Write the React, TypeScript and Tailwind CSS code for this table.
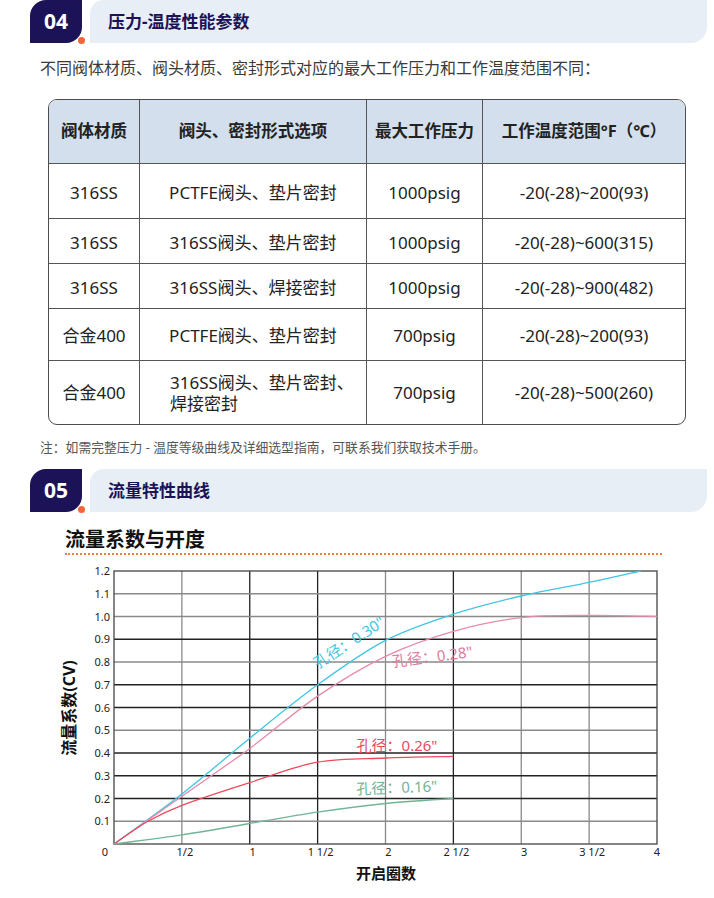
import React from "react";

type Pt = [number, number];

const PL = 114;
const PR = 657;
const PT = 12;
const PB = 285;
const xs = (t: number) => PL + (t / 4) * (PR - PL);
const ys = (v: number) => PB - (v / 1.2) * (PB - PT);

// catmull-rom -> cubic bezier so the curves stay smooth
const smoothPath = (pts: Pt[]) => {
  const p = pts.map(([t, v]) => [xs(t), ys(v)] as Pt);
  let d = `M${p[0][0]},${p[0][1]}`;
  for (let i = 0; i < p.length - 1; i++) {
    const p0 = p[i - 1] || p[i];
    const p1 = p[i];
    const p2 = p[i + 1];
    const p3 = p[i + 2] || p2;
    const c1x = p1[0] + (p2[0] - p0[0]) / 6;
    const c1y = p1[1] + (p2[1] - p0[1]) / 6;
    const c2x = p2[0] - (p3[0] - p1[0]) / 6;
    const c2y = p2[1] - (p3[1] - p1[1]) / 6;
    d += ` C${c1x.toFixed(1)},${c1y.toFixed(1)} ${c2x.toFixed(1)},${c2y.toFixed(1)} ${p2[0].toFixed(1)},${p2[1].toFixed(1)}`;
  }
  return d;
};

const curves = [
  {
    color: "#3ec6e2",
    pts: [[0, 0], [0.5, 0.22], [1, 0.465], [1.5, 0.7], [2, 0.895], [2.5, 1.01], [3, 1.09], [3.5, 1.15], [3.88, 1.2]] as Pt[],
  },
  {
    color: "#e58aac",
    pts: [[0, 0], [0.5, 0.21], [1, 0.42], [1.5, 0.65], [2, 0.825], [2.5, 0.935], [3, 0.995], [3.5, 1.005], [4, 1.0]] as Pt[],
  },
  {
    color: "#ea4c5c",
    pts: [[0, 0], [0.25, 0.1], [0.5, 0.17], [1, 0.27], [1.5, 0.36], [2, 0.378], [2.5, 0.385]] as Pt[],
  },
  {
    color: "#6fb597",
    pts: [[0, 0], [0.5, 0.04], [1, 0.09], [1.5, 0.14], [2, 0.178], [2.5, 0.2]] as Pt[],
  },
];

const vLines = [
  { t: 0.5, dark: false },
  { t: 1, dark: true },
  { t: 1.5, dark: true },
  { t: 2, dark: false },
  { t: 2.5, dark: true },
  { t: 3, dark: false },
  { t: 3.5, dark: false },
];
const hLines = [
  { v: 0.1, dark: false },
  { v: 0.2, dark: true },
  { v: 0.3, dark: true },
  { v: 0.4, dark: true },
  { v: 0.5, dark: false },
  { v: 0.6, dark: true },
  { v: 0.7, dark: true },
  { v: 0.8, dark: false },
  { v: 0.9, dark: true },
  { v: 1.0, dark: false },
  { v: 1.1, dark: false },
];
const xLabels = [
  { t: 0.5, s: "1/2" },
  { t: 1, s: "1" },
  { t: 1.5, s: "1 1/2" },
  { t: 2, s: "2" },
  { t: 2.5, s: "2 1/2" },
  { t: 3, s: "3" },
  { t: 3.5, s: "3 1/2" },
  { t: 4, s: "4" },
];

const rows = [
  { h: "h-[55px]", a: "316SS", b: "PCTFE阀头、垫片密封", c: "1000psig", d: "-20(-28)~200(93)" },
  { h: "h-[45px]", a: "316SS", b: "316SS阀头、垫片密封", c: "1000psig", d: "-20(-28)~600(315)" },
  { h: "h-[45px]", a: "316SS", b: "316SS阀头、焊接密封", c: "1000psig", d: "-20(-28)~900(482)" },
  { h: "h-[52px]", a: "合金400", b: "PCTFE阀头、垫片密封", c: "700psig", d: "-20(-28)~200(93)" },
];

function SectionHeader({ num, title, bold }: { num: string; title: string; bold?: boolean }) {
  return (
    <div className="relative flex h-[43px] pl-[30px] pr-[7px]">
      <div className="flex w-[52px] items-center justify-center rounded-tl-[16px] rounded-br-[16px] bg-[#1b1257] text-[21px] font-bold text-white">
        {num}
      </div>
      <span className="absolute left-[78px] top-[37px] h-[7px] w-[7px] rounded-full bg-[#f2663a]" />
      <div className="ml-2 flex flex-1 items-center rounded-tl-[14px] rounded-br-[16px] bg-[#e7eef6] pl-[18px]">
        <span className={`text-[17px] text-[#1b1257] ${bold ? "font-bold" : "font-semibold"}`}>{title}</span>
      </div>
    </div>
  );
}

export default function App() {
  const font = { fontFamily: '"Noto Sans", "Noto Sans CJK SC", sans-serif' };
  return (
    <div className="w-[714px] bg-white" style={font}>
      <SectionHeader num="04" title="压力-温度性能参数" bold />

      <p className="mt-[13px] pl-[40px] text-[16px] leading-[24px] text-[#3a3a3a]">
        不同阀体材质、阀头材质、密封形式对应的最大工作压力和工作温度范围不同：
      </p>

      <div className="ml-[48px] mt-[19px] w-[638px] overflow-hidden rounded-[9px] border border-[#4d4d4d] text-[17px] text-[#222]">
        <div className="grid h-[64px] grid-cols-[91px_227px_116px_1fr] border-b border-[#555] bg-[#d3dfec] text-[16.5px] font-bold">
          <div className="flex items-center justify-center border-r border-[#555]">阀体材质</div>
          <div className="flex items-center justify-center border-r border-[#555]">阀头、密封形式选项</div>
          <div className="flex items-center justify-center border-r border-[#555]">最大工作压力</div>
          <div className="flex items-center justify-center">工作温度范围°F（℃）</div>
        </div>
        {rows.map((r, i) => (
          <div key={i} className={`grid grid-cols-[91px_227px_116px_1fr] border-b border-[#555] ${r.h}`}>
            <div className="flex items-center justify-center border-r border-[#555] pt-[3px]">{r.a}</div>
            <div className="flex items-center justify-center border-r border-[#555] pt-[3px]">{r.b}</div>
            <div className="flex items-center justify-center border-r border-[#555] pt-[3px]">{r.c}</div>
            <div className="flex items-center justify-center pt-[3px]">{r.d}</div>
          </div>
        ))}
        <div className="grid h-[63px] grid-cols-[91px_227px_116px_1fr]">
          <div className="flex items-center justify-center border-r border-[#555]">合金400</div>
          <div className="flex flex-col justify-center border-r border-[#555] pl-[30px] leading-[21px]">
            <span>316SS阀头、垫片密封、</span>
            <span>焊接密封</span>
          </div>
          <div className="flex items-center justify-center border-r border-[#555]">700psig</div>
          <div className="flex items-center justify-center">-20(-28)~500(260)</div>
        </div>
      </div>

      <p className="mt-[14px] pl-[40px] text-[12.8px] leading-[16px] text-[#555]">
        注：如需完整压力 - 温度等级曲线及详细选型指南，可联系我们获取技术手册。
      </p>

      <div className="mt-[14px]">
        <SectionHeader num="05" title="流量特性曲线" />
      </div>

      <div className="ml-[65px] mt-[16px] w-[597px]">
        <h2 className="text-[20px] font-bold leading-[24px] text-[#111]">流量系数与开度</h2>
        <div className="mt-[1px] border-b-2 border-dotted border-[#f07a4e]" />
      </div>

      <svg width="714" height="330" viewBox="0 0 714 330" className="mt-[4px] block">
        {vLines.map((l) => (
          <line key={l.t} x1={xs(l.t)} x2={xs(l.t)} y1={PT} y2={PB} stroke={l.dark ? "#222" : "#8a8a8a"} strokeWidth="1.3" />
        ))}
        {hLines.map((l) => (
          <line key={l.v} x1={PL} x2={PR} y1={ys(l.v)} y2={ys(l.v)} stroke={l.dark ? "#222" : "#8a8a8a"} strokeWidth="1.3" />
        ))}
        <rect x={PL} y={PT} width={PR - PL} height={PB - PT} fill="none" stroke="#444" strokeWidth="1.3" />

        {curves.map((c, i) => (
          <path key={i} d={smoothPath(c.pts)} fill="none" stroke={c.color} strokeWidth="1.3" />
        ))}

        <g fontSize="11" fill="#222">
          {[1.2, 1.1, 1.0, 0.9, 0.8, 0.7, 0.6, 0.5, 0.4, 0.3, 0.2, 0.1].map((v) => (
            <text key={v} x={110} y={ys(v) + 4} textAnchor="end">
              {v.toFixed(1)}
            </text>
          ))}
          <text x={105} y={297} textAnchor="middle">0</text>
          {xLabels.map((l) => (
            <text key={l.s} x={xs(l.t) + (l.t === 4 ? 0 : 3)} y={297} textAnchor="middle">
              {l.s}
            </text>
          ))}
        </g>

        <g fontSize="15">
          <text x={352} y={88} fill="#3ec6e2" textAnchor="middle" transform="rotate(-33 352 88)">
            孔径：0.30"
          </text>
          <text x={433} y={103} fill="#e07aa0" textAnchor="middle" transform="rotate(-7 433 103)">
            孔径：0.28"
          </text>
          <text x={397} y={192} fill="#ea4c5c" textAnchor="middle">
            孔径：0.26"
          </text>
          <text x={397} y={234} fill="#6fb597" textAnchor="middle" transform="rotate(-2 397 234)">
            孔径：0.16"
          </text>
        </g>

        <text x={386} y={320} fontSize="15" fontWeight="700" fill="#111" textAnchor="middle">
          开启圈数
        </text>
        <text x={75} y={149} fontSize="16" fontWeight="700" fill="#111" textAnchor="middle" transform="rotate(-90 75 149)">
          流量系数(CV)
        </text>
      </svg>
    </div>
  );
}
